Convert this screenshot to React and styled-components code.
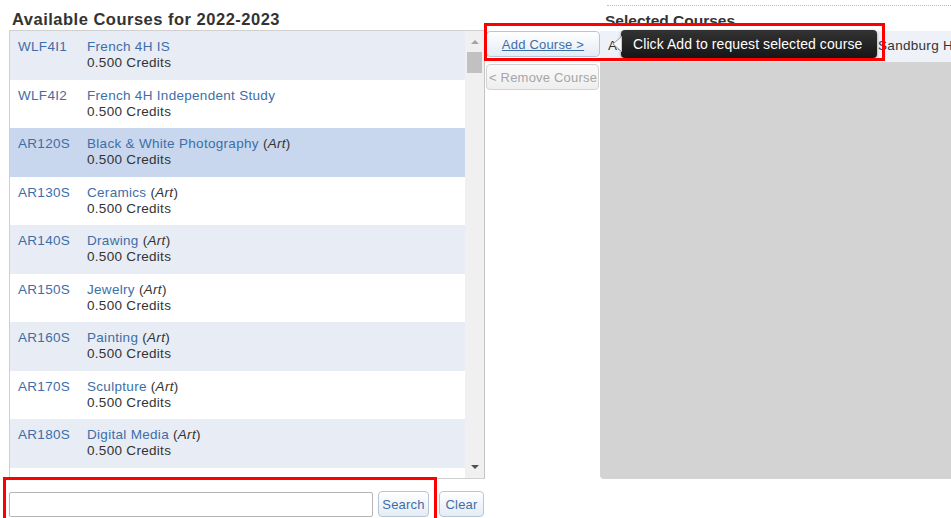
import React from 'react';
import styled, { createGlobalStyle, css } from 'styled-components';

const GlobalStyle = createGlobalStyle`
	html, body {
		margin: 0;
		padding: 0;
		background: #fff;
		font-family: "Liberation Sans", Arial, sans-serif;
		overflow: hidden;
	}
`;

const courses = [
	{ code: 'WLF4I1', title: 'French 4H IS' },
	{ code: 'WLF4I2', title: 'French 4H Independent Study' },
	{ code: 'AR120S', title: 'Black & White Photography', dept: 'Art', selected: true },
	{ code: 'AR130S', title: 'Ceramics', dept: 'Art' },
	{ code: 'AR140S', title: 'Drawing', dept: 'Art' },
	{ code: 'AR150S', title: 'Jewelry', dept: 'Art' },
	{ code: 'AR160S', title: 'Painting', dept: 'Art' },
	{ code: 'AR170S', title: 'Sculpture', dept: 'Art' },
	{ code: 'AR180S', title: 'Digital Media', dept: 'Art' },
];

const PageCss = styled.div`
	position: relative;
	width: 951px;
	height: 518px;
	display: flex;
	padding-left: 9px;
	box-sizing: border-box;
	overflow: hidden;
`;

const LeftColumnCss = styled.div`
	width: 476px;
	display: flex;
	flex-direction: column;
`;

const HeadingCss = styled.h2`
	margin: 0;
	height: 30px;
	box-sizing: border-box;
	padding: 10px 0 0 3px;
	font-size: 16.5px;
	letter-spacing: 0.5px;
	line-height: 18px;
	font-weight: bold;
	color: #333;
	white-space: nowrap;
`;

const ListBoxCss = styled.div`
	height: 449px;
	box-sizing: border-box;
	border: 1px solid #d0d0d0;
	border-right-color: #c4c4c4;
	display: flex;
	background: #fff;
`;

const RowsCss = styled.div`
	flex: 1;
	overflow: hidden;
`;

const RowCss = styled.div`
	height: 48.5px;
	box-sizing: border-box;
	padding: 8px 0 0 8px;
	display: flex;
	font-size: 13.5px;
	letter-spacing: 0.3px;
	line-height: 16px;
	background: ${({ $alt }) => ($alt ? '#e8ecf4' : '#fff')};

	${({ $selected }) =>
		$selected &&
		css`
			background: #c8d7ee;
		`}
`;

const CodeCss = styled.span`
	width: 69px;
	flex: none;
	color: #3d6ea8;
`;

const InfoCss = styled.div`
	display: flex;
	flex-direction: column;
`;

const TitleCss = styled.span`
	color: #3d6ea8;
`;

const DeptCss = styled.span`
	color: #333;

	em {
		font-style: italic;
	}
`;

const CreditsCss = styled.span`
	color: #333;
`;

const ScrollbarCss = styled.div`
	width: 19px;
	flex: none;
	background: #f0f0f0;
	display: flex;
	flex-direction: column;
	align-items: center;
`;

const ArrowCss = styled.div`
	width: 0;
	height: 0;
	border-left: 4px solid transparent;
	border-right: 4px solid transparent;
	${({ $down }) =>
		$down
			? css`
					border-top: 4px solid #505050;
					margin-top: auto;
					margin-bottom: 9px;
			  `
			: css`
					border-bottom: 4px solid #a3a3a3;
					margin-top: 9px;
			  `}
`;

const ThumbCss = styled.div`
	width: 15px;
	height: 21px;
	margin-top: 8px;
	background: #c1c1c1;
`;

const SearchRowCss = styled.div`
	display: flex;
	align-items: center;
	margin-top: 12px;
	gap: 5px;
`;

const SearchInputCss = styled.input`
	width: 364px;
	height: 25px;
	box-sizing: border-box;
	border: 1px solid #b5b5b5;
	border-radius: 2px;
	padding: 0 4px;
	font: 13px "Liberation Sans", Arial, sans-serif;
	outline: none;
`;

const ButtonCss = styled.button`
	height: 26px;
	box-sizing: border-box;
	padding: 0 2px;
	border: 1px solid #b4c6dc;
	border-radius: 4px;
	background: linear-gradient(#ffffff, #e4ecf5);
	color: #3d6ea8;
	font: 13px "Liberation Sans", Arial, sans-serif;
	letter-spacing: 0.2px;
	cursor: pointer;
	white-space: nowrap;
	width: ${({ $width }) => $width}px;
	margin-left: ${({ $gap }) => $gap || 0}px;

	${({ $link }) =>
		$link &&
		css`
			text-decoration: underline;
		`}

	${({ disabled }) =>
		disabled &&
		css`
			border-color: #d2d2d2;
			background: linear-gradient(#fafafa, #eeeeee);
			color: #a6a6a6;
			cursor: default;
		`}
`;

const MiddleColumnCss = styled.div`
	width: 115px;
	padding: 31px 0 0 1px;
	box-sizing: border-box;
	display: flex;
	flex-direction: column;
	gap: 7px;
`;

const RightColumnCss = styled.div`
	flex: 1;
	display: flex;
	flex-direction: column;
	min-width: 0;
`;

const RightHeadingCss = styled(HeadingCss)`
	height: 26px;
	margin: 5px 0 0 7px;
	padding: 6px 0 0 0;
	border-top: 1px dotted #bdbdbd;
	font-size: 15.5px;
	letter-spacing: 0;
	text-indent: -2px;
`;

const SelectedBoxCss = styled.div`
	height: 448px;
	background: #d3d3d3;
	border-bottom-left-radius: 4px;
	overflow: hidden;
`;

const SelectedRowCss = styled.div`
	height: 31px;
	box-sizing: border-box;
	padding: 7px 0 0 8px;
	background: #eef2f8;
	color: #333;
	font-size: 13.5px;
	letter-spacing: 0.3px;
	line-height: 16px;
	white-space: nowrap;
`;

const TooltipCss = styled.div`
	position: absolute;
	left: 621px;
	top: 30px;
	width: 256px;
	height: 28px;
	box-sizing: border-box;
	padding-left: 12px;
	border-radius: 4px;
	background: linear-gradient(#333, #161616);
	box-shadow: 0 1px 3px rgba(0, 0, 0, 0.45);
	color: #fff;
	font-size: 14px;
	letter-spacing: 0.08px;
	line-height: 28px;
	white-space: nowrap;

	svg {
		position: absolute;
		left: -11px;
		top: 5px;
	}
`;

const MarkerCss = styled.div`
	position: absolute;
	border: 3.5px solid #ff0000;
	box-sizing: border-box;
	pointer-events: none;
`;

function CourseRow({ course, index }) {
	return (
		<RowCss $alt={index % 2 === 0} $selected={course.selected}>
			<CodeCss>{course.code}</CodeCss>
			<InfoCss>
				<span>
					<TitleCss>{course.title}</TitleCss>
					{course.dept && (
						<DeptCss>
							{' ('}
							<em>{course.dept}</em>
							{')'}
						</DeptCss>
					)}
				</span>
				<CreditsCss>0.500 Credits</CreditsCss>
			</InfoCss>
		</RowCss>
	);
}

export default function App() {
	return (
		<>
			<GlobalStyle />
			<PageCss>
				<LeftColumnCss>
					<HeadingCss>Available Courses for 2022-2023</HeadingCss>
					<ListBoxCss>
						<RowsCss>
							{courses.map((course, i) => (
								<CourseRow key={course.code} course={course} index={i} />
							))}
						</RowsCss>
						<ScrollbarCss>
							<ArrowCss />
							<ThumbCss />
							<ArrowCss $down />
						</ScrollbarCss>
					</ListBoxCss>
					<SearchRowCss>
						<SearchInputCss type="text" />
						<ButtonCss $width={51}>Search</ButtonCss>
						<ButtonCss $width={45} $gap={5}>
							Clear
						</ButtonCss>
					</SearchRowCss>
				</LeftColumnCss>

				<MiddleColumnCss>
					<ButtonCss $width={114} $link>
						Add Course &gt;
					</ButtonCss>
					<ButtonCss $width={113} disabled>
						&lt; Remove Course
					</ButtonCss>
				</MiddleColumnCss>

				<RightColumnCss>
					<RightHeadingCss>Selected Courses</RightHeadingCss>
					<SelectedBoxCss>
						<SelectedRowCss>
							AHMI Buses to College Requested @ Carl Sandburg High School
						</SelectedRowCss>
					</SelectedBoxCss>
				</RightColumnCss>

				<TooltipCss>
					<svg width="12" height="18" viewBox="0 0 12 18">
						<polygon points="12,1 3,9 12,17" fill="#f7f7f7" stroke="#9a9a9a" strokeWidth="1" />
					</svg>
					Click Add to request selected course
				</TooltipCss>

				<MarkerCss style={{ left: 484, top: 23, width: 401, height: 38 }} />
				<MarkerCss style={{ left: 3, top: 477, width: 434, height: 60 }} />
			</PageCss>
		</>
	);
}
